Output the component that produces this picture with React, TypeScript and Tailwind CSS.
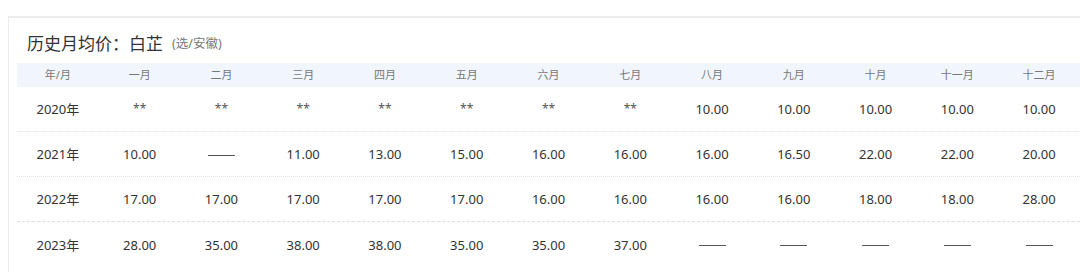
const months = ["年/月", "一月", "二月", "三月", "四月", "五月", "六月", "七月", "八月", "九月", "十月", "十一月", "十二月"];

const rows: string[][] = [
  ["2020年", "**", "**", "**", "**", "**", "**", "**", "10.00", "10.00", "10.00", "10.00", "10.00"],
  ["2021年", "10.00", "——", "11.00", "13.00", "15.00", "16.00", "16.00", "16.00", "16.50", "22.00", "22.00", "20.00"],
  ["2022年", "17.00", "17.00", "17.00", "17.00", "17.00", "16.00", "16.00", "16.00", "16.00", "18.00", "18.00", "28.00"],
  ["2023年", "28.00", "35.00", "38.00", "38.00", "35.00", "35.00", "37.00", "——", "——", "——", "——", "——"],
];

const rowBorders = [
  "border-b border-dotted border-[#e2e2e2]",
  "border-b border-dotted border-[#e2e2e2]",
  "border-b border-dashed border-[#dcdcdc]",
  "",
];

function Cell({ v }: { v: string }) {
  if (v === "——") {
    return (
      <div className="flex justify-center">
        <span className="block w-[27px] h-px bg-[#555]" aria-label="——" />
      </div>
    );
  }
  if (v === "**") {
    return <div className="text-center text-[12px] text-[#555] -mt-[3px]">{v}</div>;
  }
  return <div className="text-center text-[13px] text-[#333]">{v}</div>;
}

export default function App() {
  return (
    <div className="w-[1080px] h-[272px] overflow-hidden bg-white font-['Noto_Sans','Noto_Sans_CJK_SC',sans-serif]">
      <div className="ml-2 mt-4 h-[300px] border-t-2 border-l border-[#ececec] pl-2">
        <div className="pt-[14px] pl-[10px] flex items-center h-[38px]">
          <span className="text-[17px] leading-6 text-[#333]">历史月均价：白芷</span>
          <span className="ml-[9px] text-[12.5px] text-[#777]">(选/安徽)</span>
        </div>
        <div className="mt-[7px]">
          <div className="grid grid-cols-[repeat(13,minmax(0,1fr))] h-6 bg-[#f1f6fd] items-center">
            {months.map((m) => (
              <div key={m} className="text-center text-[11px] text-[#777]">
                {m}
              </div>
            ))}
          </div>
          {rows.map((r, i) => (
            <div
              key={r[0]}
              className={`grid grid-cols-[repeat(13,minmax(0,1fr))] h-[45px] pt-[2px] items-center ${rowBorders[i]}`}
            >
              {r.map((v, j) => (
                <Cell key={j} v={v} />
              ))}
            </div>
          ))}
        </div>
      </div>
    </div>
  );
}
